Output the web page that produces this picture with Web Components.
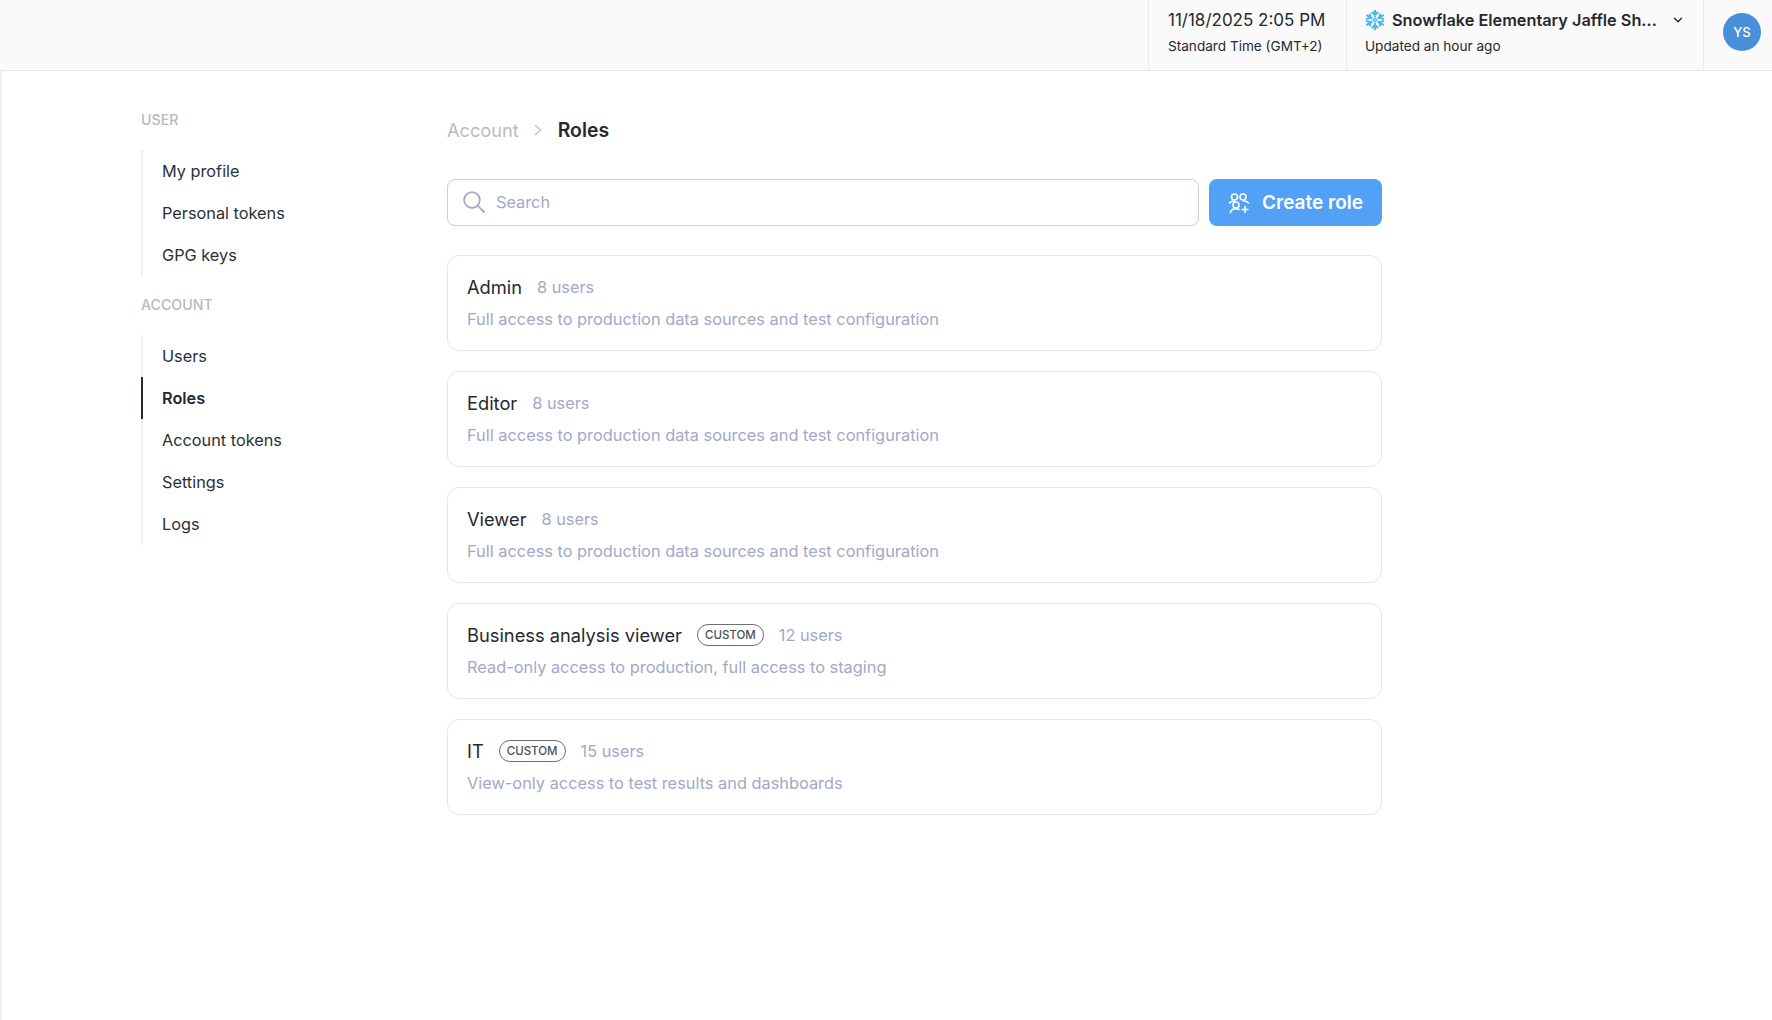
<!DOCTYPE html>
<html lang="en">
<head>
<meta charset="utf-8">
<title>Roles</title>
<style>
  html, body { margin: 0; height: 100%; background: #fff; }
  body { font-family: Inter, "Liberation Sans", sans-serif; color: #24292f; overflow: hidden; }
</style>
</head>
<body>
<app-shell>
  <top-bar slot="top"></top-bar>
  <side-nav slot="side">
    <nav-group label="USER">
      <nav-link>My profile</nav-link>
      <nav-link>Personal tokens</nav-link>
      <nav-link>GPG keys</nav-link>
    </nav-group>
    <nav-group label="ACCOUNT">
      <nav-link>Users</nav-link>
      <nav-link active>Roles</nav-link>
      <nav-link>Account tokens</nav-link>
      <nav-link>Settings</nav-link>
      <nav-link>Logs</nav-link>
    </nav-group>
  </side-nav>
  <roles-page>
    <role-card name="Admin" users="8 users">Full access to production data sources and test configuration</role-card>
    <role-card name="Editor" users="8 users">Full access to production data sources and test configuration</role-card>
    <role-card name="Viewer" users="8 users">Full access to production data sources and test configuration</role-card>
    <role-card name="Business analysis viewer" users="12 users" custom>Read-only access to production, full access to staging</role-card>
    <role-card name="IT" users="15 users" custom>View-only access to test results and dashboards</role-card>
  </roles-page>
</app-shell>

<script>
class AppShell extends HTMLElement {
  constructor() {
    super();
    this.attachShadow({ mode: "open" }).innerHTML = `
      <style>
        :host { display: flex; flex-direction: column; height: 100vh; }
        .body { flex: 1; display: flex; border-left: 2px solid #eeeeee; padding-left: 139px; }
      </style>
      <slot name="top"></slot>
      <div class="body">
        <slot name="side"></slot>
        <slot></slot>
      </div>
    `;
  }
}

class TopBar extends HTMLElement {
  constructor() {
    super();
    this.attachShadow({ mode: "open" }).innerHTML = `
      <style>
        :host { display: flex; justify-content: flex-end; height: 71px; box-sizing: border-box; background: #fafafa; border-bottom: 1px solid #e6e6e6; font-size: 13.6px; color: #24292f; }
        .cell { display: flex; flex-direction: column; justify-content: center; gap: 7px; padding: 0 19px 6px; border-left: 1px solid #e9e9e9; box-sizing: border-box; }
        .time { width: 198px; }
        .source { width: 357px; padding-left: 18px; }
        .big { font-size: 17px; line-height: 20px; white-space: nowrap; }
        .small { line-height: 18px; white-space: nowrap; }
        .name { display: flex; align-items: center; font-size: 16.3px; font-weight: 600; }
        .name svg.flake { margin-right: 7px; flex: none; }
        .name span { flex: 1; }
        .user { width: 69px; box-sizing: border-box; display: flex; align-items: center; justify-content: flex-end; border-left: 1px solid #e9e9e9; padding: 0 11px 6px 0; }
        .avatar { width: 38px; height: 38px; border-radius: 50%; background: #4a90d9; color: #fff; font-size: 13px; font-weight: 500; display: flex; align-items: center; justify-content: center; }
      </style>
      <div class="cell time">
        <div class="big">11/18/2025 2:05 PM</div>
        <div class="small">Standard Time (GMT+2)</div>
      </div>
      <div class="cell source">
        <div class="big name">
          <svg class="flake" width="20" height="20" viewBox="0.8 0.8 18.4 18.4" fill="none" stroke="#4db8ea" stroke-width="2" stroke-linecap="round">
            <path d="M10 1.5v5M7.6 3.2 10 5.2l2.4-2M10 18.5v-5M7.6 16.8 10 14.8l2.4 2"/>
            <path d="M2.6 5.7l4.3 2.5M2.5 8.9l3.4-.9-.6-3M17.4 14.3l-4.3-2.5M17.5 11.1l-3.4.9.6 3"/>
            <path d="M17.4 5.7l-4.3 2.5M17.5 8.9l-3.4-.9.6-3M2.6 14.3l4.3-2.5M2.5 11.1l3.4.9-.6 3"/>
            <path d="M10 8.3l1.7 1.7-1.7 1.7L8.3 10z" stroke-width="1.2"/>
          </svg>
          <span>Snowflake Elementary Jaffle Sh...</span>
          <svg width="12" height="12" viewBox="0 0 12 12" fill="none" stroke="#24292f" stroke-width="1.4" stroke-linecap="round" stroke-linejoin="round"><path d="M2.5 4.2 6 7.7l3.5-3.5"/></svg>
        </div>
        <div class="small">Updated an hour ago</div>
      </div>
      <div class="user"><div class="avatar">YS</div></div>
    `;
  }
}

class SideNav extends HTMLElement {
  constructor() {
    super();
    this.attachShadow({ mode: "open" }).innerHTML = `
      <style>
        :host { display: flex; flex-direction: column; gap: 20px; width: 306px; flex: none; box-sizing: border-box; padding-top: 40px; }
      </style>
      <slot></slot>
    `;
  }
}

class NavGroup extends HTMLElement {
  constructor() {
    super();
    this.attachShadow({ mode: "open" }).innerHTML = `
      <style>
        :host { display: block; width: 200px; }
        .label { font-size: 14.2px; line-height: 18px; font-weight: 500; color: #b9b9b9; margin-bottom: 21px; }
        .items { display: flex; flex-direction: column; border-left: 2px solid #eeeeee; }
      </style>
      <div class="label"></div>
      <div class="items"><slot></slot></div>
    `;
    this.shadowRoot.querySelector(".label").textContent = this.getAttribute("label");
  }
}

class NavLink extends HTMLElement {
  constructor() {
    super();
    this.attachShadow({ mode: "open" }).innerHTML = `
      <style>
        :host { display: flex; align-items: center; height: 42px; padding-left: 19px; margin-left: -2px; border-left: 2px solid transparent; font-size: 16.3px; color: #2b3036; white-space: nowrap; }
        :host([active]) { border-left-color: #24292f; font-weight: 600; color: #24292f; }
      </style>
      <slot></slot>
    `;
  }
}

class RolesPage extends HTMLElement {
  constructor() {
    super();
    this.attachShadow({ mode: "open" }).innerHTML = `
      <style>
        :host { display: block; width: 935px; flex: none; padding-top: 46px; }
        .crumbs { display: flex; align-items: center; height: 26px; font-size: 18.2px; color: #bcbcbc; }
        .crumbs svg { margin: 0 15px 0 14px; }
        .crumbs b { font-size: 19.4px; font-weight: 600; color: #24292f; }
        .tools { display: flex; gap: 10px; margin: 36px 0 29px; height: 47px; }
        .search { flex: 1; display: flex; align-items: center; gap: 11px; box-sizing: border-box; padding: 0 0 1px 15px; border: 1.5px solid #c9cde3; border-radius: 8px; font-size: 16.3px; color: #a3a8c6; }
        .create { width: 173px; display: flex; align-items: center; justify-content: center; gap: 12px; border-radius: 8px; background: #53a1f7; color: #fff; font-size: 19px; font-weight: 600; }
        .list { display: flex; flex-direction: column; gap: 20px; }
      </style>
      <div class="crumbs">
        <span>Account</span>
        <svg width="10" height="14" viewBox="0 0 10 14" fill="none" stroke="#c6c6c6" stroke-width="1.6" stroke-linecap="round" stroke-linejoin="round"><path d="M2.5 2.5 7.5 7l-5 4.5"/></svg>
        <b>Roles</b>
      </div>
      <div class="tools">
        <div class="search">
          <svg width="22" height="22" viewBox="0 0 22 22" fill="none" stroke="#a3a8c6" stroke-width="1.8" stroke-linecap="round"><circle cx="9" cy="9" r="7.8"/><path d="M14.7 14.7 21 21"/></svg>
          <span>Search</span>
        </div>
        <div class="create">
          <svg width="22" height="22" viewBox="0 0 22 22" fill="none" stroke="#fff" stroke-width="1.6" stroke-linecap="round" stroke-linejoin="round">
            <circle cx="6.5" cy="5" r="3"/><circle cx="15" cy="5" r="3"/>
            <path d="M1.5 11c1-1.5 2.6-2 5-2M20.5 11c-1-1.5-2.6-2-5-2"/>
            <circle cx="8" cy="13" r="3"/><path d="M2.5 20.5c.5-2.5 2.7-3.700 5.500-3.700 1.200 0 2.200.2 3 .7"/>
            <path d="M17 14.500v6M14 17.500h6"/>
          </svg>
          <span>Create role</span>
        </div>
      </div>
      <div class="list"><slot></slot></div>
    `;
  }
}

class RoleCard extends HTMLElement {
  constructor() {
    super();
    this.attachShadow({ mode: "open" }).innerHTML = `
      <style>
        :host { display: block; height: 96px; box-sizing: border-box; padding: 19px 19px 0; border: 1.5px solid #e6e6ea; border-radius: 12px; background: #fff; }
        .head { display: flex; align-items: center; gap: 15px; height: 24px; white-space: nowrap; }
        .name { font-size: 18.3px; color: #24292f; }
        .users { font-size: 16.3px; color: #a3a8c6; }
        .tag { display: none; align-items: center; height: 20px; padding: 0 7px; border: 1.5px solid #6b7075; border-radius: 11px; font-size: 11.5px; font-weight: 500; color: #4c5157; }
        :host([custom]) .tag { display: flex; }
        .desc { margin-top: 8px; font-size: 16.35px; line-height: 24px; color: #a3a8c6; white-space: nowrap; }
      </style>
      <div class="head">
        <span class="name"></span>
        <span class="tag">CUSTOM</span>
        <span class="users"></span>
      </div>
      <div class="desc"><slot></slot></div>
    `;
    this.shadowRoot.querySelector(".name").textContent = this.getAttribute("name");
    this.shadowRoot.querySelector(".users").textContent = this.getAttribute("users");
  }
}

customElements.define("app-shell", AppShell);
customElements.define("top-bar", TopBar);
customElements.define("side-nav", SideNav);
customElements.define("nav-group", NavGroup);
customElements.define("nav-link", NavLink);
customElements.define("roles-page", RolesPage);
customElements.define("role-card", RoleCard);
</script>
</body>
</html>
